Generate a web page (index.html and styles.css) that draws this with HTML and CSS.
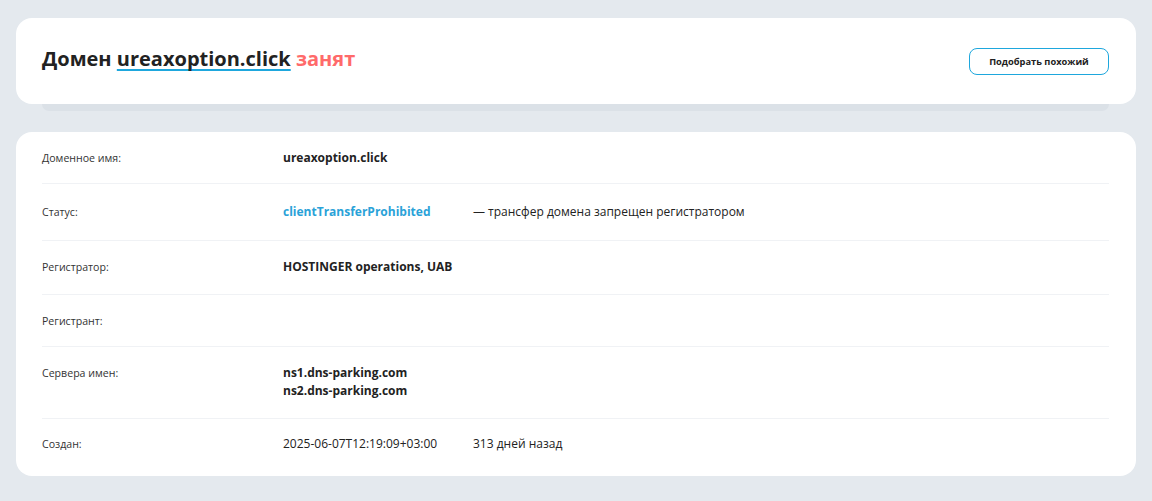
FILE: index.html
```html
<!DOCTYPE html>
<html lang="ru">
<head>
    <meta charset="UTF-8">
    <meta name="viewport" content="width=device-width, initial-scale=1.0">
    <title>Домен ureaxoption.click</title>
    <link rel="stylesheet" href="styles.css">
</head>
<body>
    <div class="page">
        <div class="card header-card">
            <h1 class="title">Домен <a href="#" class="domain-link">ureaxoption.click</a> <span class="busy">занят</span></h1>
            <button class="similar-btn">Подобрать похожий</button>
        </div>

        <div class="card info-card">
            <div class="row">
                <div class="label">Доменное имя:</div>
                <div class="value"><b>ureaxoption.click</b></div>
            </div>
            <div class="row">
                <div class="label">Статус:</div>
                <div class="value pair">
                    <span class="cell"><a href="#" class="status-link">clientTransferProhibited</a></span>
                    <span class="note">— трансфер домена запрещен регистратором</span>
                </div>
            </div>
            <div class="row">
                <div class="label">Регистратор:</div>
                <div class="value"><b>HOSTINGER operations, UAB</b></div>
            </div>
            <div class="row">
                <div class="label">Регистрант:</div>
                <div class="value"></div>
            </div>
            <div class="row">
                <div class="label">Сервера имен:</div>
                <div class="value">
                    <b>ns1.dns-parking.com</b><br>
                    <b>ns2.dns-parking.com</b>
                </div>
            </div>
            <div class="row">
                <div class="label">Создан:</div>
                <div class="value pair">
                    <span class="cell">2025-06-07T12:19:09+03:00</span>
                    <span class="note">313 дней назад</span>
                </div>
            </div>
        </div>
    </div>
</body>
</html>
```

FILE: styles.css
```css
* {
    margin: 0;
    padding: 0;
    box-sizing: border-box;
}

body {
    background-color: #e4e9ee;
    font-family: "Open Sans", "Noto Sans", sans-serif;
    color: #222;
}

.page {
    padding: 18px 16px 0;
}

.card {
    background-color: #fff;
    border-radius: 16px;
}

/* header */

.header-card {
    position: relative;
    height: 86px;
    padding: 0 27px 0 26px;
    display: flex;
    align-items: center;
    justify-content: space-between;
}

.header-card::after {
    content: "";
    position: absolute;
    left: 26px;
    right: 27px;
    bottom: -7px;
    height: 7px;
    background-color: #dbe1e7;
    border-radius: 0 0 8px 8px;
}

.title {
    font-size: 20px;
    font-weight: 700;
    color: #222;
    margin-top: -5px;
}

.domain-link {
    color: #222;
    text-decoration: underline;
    text-decoration-color: #1ea7dd;
    text-decoration-thickness: 2px;
    text-underline-offset: 3px;
    text-decoration-skip-ink: none;
}

.busy {
    color: #ff6a6a;
}

.similar-btn {
    width: 140px;
    height: 27px;
    background: #fff;
    border: 1px solid #1ea7dd;
    border-radius: 8px;
    font-family: inherit;
    font-size: 9.3px;
    font-weight: 700;
    color: #222;
    cursor: pointer;
}

/* info table */

.info-card {
    margin-top: 28px;
    padding: 0 27px 0 26px;
}

.row {
    display: grid;
    grid-template-columns: 241px 1fr;
    padding: 17px 0 18px;
    line-height: 18px;
    border-bottom: 1px solid #f0f2f5;
}

.row:nth-child(1) {
    padding: 17px 0 16px;
}

.row:nth-child(2) {
    padding: 19px 0 19px;
}

.row:nth-child(4) {
    padding: 17px 0 16px;
}

.row:last-child {
    border-bottom: none;
    padding: 16px 0 23px;
}

.label {
    font-size: 10.6px;
    color: #333;
}

.value {
    font-size: 12px;
    color: #222;
}

.value b {
    font-weight: 700;
}

.pair {
    display: flex;
}

.cell {
    width: 190px;
}

.status-link {
    color: #2aa2d8;
    font-weight: 700;
    text-decoration: none;
}

.note {
    color: #222;
}
```
